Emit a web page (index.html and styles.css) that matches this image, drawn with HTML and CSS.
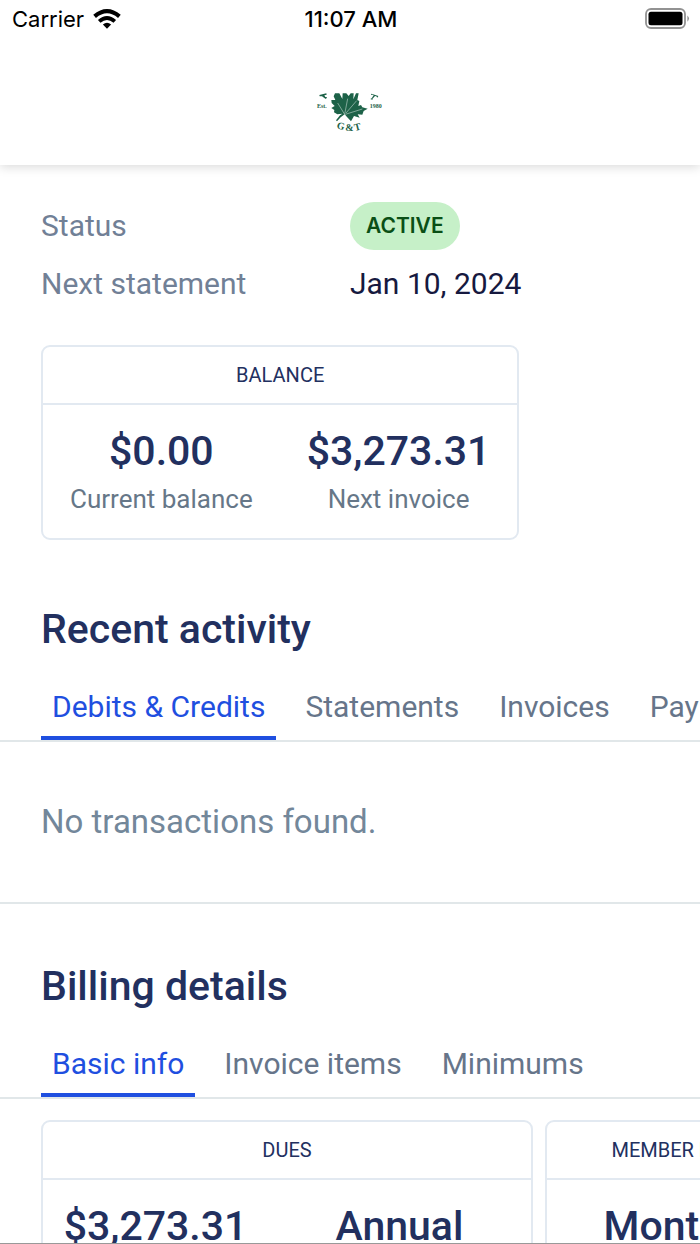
FILE: index.html
```html
<!DOCTYPE html>
<html lang="en">
<head>
    <meta charset="UTF-8">
    <meta name="viewport" content="width=device-width, initial-scale=1.0">
    <title>Billing</title>
    <link rel="stylesheet" href="styles.css">
</head>
<body>

    <div class="status-bar">
        <div class="carrier">
            <span>Carrier</span>
            <svg class="wifi" viewBox="0 0 28 20" aria-hidden="true">
                <path d="M1.6 7.4 Q14 -3 26.4 7.4" fill="none" stroke="#000" stroke-width="4.2"/>
                <path d="M6.2 12.4 Q14 5.4 21.8 12.4" fill="none" stroke="#000" stroke-width="3.8"/>
                <path d="M9.9 15.4 Q14 12 18.1 15.4 L14 19.8 Z"/>
            </svg>
        </div>
        <span class="clock">11:07 AM</span>
        <svg class="battery" viewBox="0 0 45 22" aria-hidden="true">
            <rect x="1" y="1" width="39" height="19" rx="5" fill="none" stroke="#929292" stroke-width="1.8"/>
            <rect x="3.5" y="3.7" width="34" height="13.6" rx="2.5"/>
            <path d="M42.4 7.5 Q45.6 10.5 42.4 13.7 Z" fill="#929292"/>
        </svg>
    </div>

    <header class="header">
        <svg class="logo" viewBox="0 0 270 180" role="img" aria-label="G&amp;T">
            <g fill="#1d6248">
                <path d="M90 40 L103 40 L112 57 L113 40 L124 40 L131 48 L137 40 L146 40 L145 58 L153 40 L161 40 L157 60 L163 63 L160 78 L168 75 L172 82 L188 86 L176 93 L172 104 L158 103 L164 113 L147 108 L138 124 L126 111 L119 103 L107 112 L96 124 L93 121 L105 106 L112 101 L97 103 L87 97 L88 90 L79 84 L89 78 L80 69 L79 60 L91 60 L86 49 Z"/>
                <text x="36" y="84" class="logo-small">Est.</text>
                <text x="194" y="84" class="logo-small">1980</text>
                <text class="logo-text" transform="translate(94 145) rotate(14)">G</text>
                <text class="logo-text" transform="translate(121 154)">&amp;</text>
                <text class="logo-text" transform="translate(150 153) rotate(-14)">T</text>
                <path d="M43 45 L64 40 L65 44 L58 46 L61 51 L66 51 L63 57 L59 55 L51 49 L44 49 Z"/>
                <path d="M199 41 L220 48 L217 53 L214 49 L210 48 L202 57 L203 60 L196 57 L200 55 L206 46 L202 44 L198 45 Z"/>
            </g>
            <path d="M119 103 L98 69 M119 103 L128 56 M123 99 L155 62 M121 103 L172 87" fill="none" stroke="#d5e5de" stroke-width="1.6"/>
        </svg>
    </header>

    <main class="content">
        <section class="summary">
            <dl class="details">
                <dt>Status</dt>
                <dd><span class="badge">ACTIVE</span></dd>
                <dt>Next statement</dt>
                <dd>Jan 10, 2024</dd>
            </dl>
            <div class="card">
                <h3 class="card-title">BALANCE</h3>
                <div class="card-body">
                    <div class="figure">
                        <span class="amount">$0.00</span>
                        <span class="label">Current balance</span>
                    </div>
                    <div class="figure">
                        <span class="amount">$3,273.31</span>
                        <span class="label">Next invoice</span>
                    </div>
                </div>
            </div>
        </section>

        <section>
            <h2>Recent activity</h2>
            <nav class="tabs">
                <button type="button" class="tab active">Debits &amp; Credits</button>
                <button type="button" class="tab">Statements</button>
                <button type="button" class="tab">Invoices</button>
                <button type="button" class="tab">Payments</button>
            </nav>
            <p class="empty">No transactions found.</p>
        </section>

        <section>
            <h2>Billing details</h2>
            <nav class="tabs">
                <button type="button" class="tab active">Basic info</button>
                <button type="button" class="tab">Invoice items</button>
                <button type="button" class="tab">Minimums</button>
            </nav>
            <div class="cards">
                <div class="card">
                    <h3 class="card-title">DUES</h3>
                    <div class="card-body dues">
                        <div class="figure">
                            <span class="amount">$3,273.31</span>
                            <span class="label">Amount</span>
                        </div>
                        <div class="figure">
                            <span class="amount">Annual</span>
                            <span class="label">Frequency</span>
                        </div>
                    </div>
                </div>
                <div class="card">
                    <h3 class="card-title">MEMBER FEES</h3>
                    <div class="card-body member">
                        <div class="figure">
                            <span class="amount">Monthly</span>
                            <span class="label">Frequency</span>
                        </div>
                    </div>
                </div>
            </div>
        </section>
    </main>

</body>
</html>
```

FILE: styles.css
```css
* {
    box-sizing: border-box;
}
body {
    display: flex;
    flex-direction: column;
    height: 100vh;
    margin: 0;
    overflow: hidden;
    background-color: #fff;
    color: #22305f;
    font-family: Roboto, sans-serif;
    border-bottom: 1px solid #999;
}
h2, h3, p, dl, dd {
    margin: 0;
}

/* phone status bar */
.status-bar {
    position: relative;
    z-index: 1;
    display: grid;
    grid-template-columns: 1fr auto 1fr;
    align-items: center;
    flex: none;
    height: 38px;
    padding: 0 10px 0 12px;
    background-color: #fff;
    color: #000;
    font-family: Inter, sans-serif;
    font-size: 22px;
}
.carrier {
    display: flex;
    align-items: center;
    gap: 9px;
}
.clock {
    font-weight: 500;
}
.wifi {
    width: 28px;
    height: 20px;
}
.battery {
    width: 45px;
    height: 22px;
    justify-self: end;
}

.header {
    display: flex;
    justify-content: center;
    flex: none;
    height: 127px;
    padding-top: 42px;
    background-color: #fff;
    box-shadow: 0 2px 10px rgba(0, 0, 0, 0.15);
}
.logo {
    width: 90px;
    height: 60px;
}
.logo-text {
    font: bold 30px "Liberation Serif", serif;
}
.logo-small {
    font: bold 18px "Liberation Serif", serif;
}

.content {
    flex: 1;
    min-height: 0;
    overflow: auto;
    scrollbar-width: none;
}
.summary {
    padding: 37px 41px 61px;
}
.details {
    display: grid;
    grid-template-columns: 1fr 1fr;
    row-gap: 10px;
    margin-bottom: 37px;
    font-size: 30px;
    line-height: 48px;
}
.details dt {
    color: #718096;
}
.details dd {
    color: #16193f;
}
.badge {
    display: block;
    width: fit-content;
    padding: 0 16px;
    border-radius: 24px;
    background-color: #c6f0c8;
    color: #0a4f16;
    font-family: Inter, sans-serif;
    font-size: 21px;
    font-weight: 600;
}

.card {
    flex: none;
    width: fit-content;
    border: 2px solid #e2e9f1;
    border-radius: 9px;
}
.card-title {
    border-bottom: 2px solid #e2e9f1;
    font-size: 20px;
    font-weight: 400;
    line-height: 56px;
    text-align: center;
}
.card-body {
    display: flex;
    padding: 22px 0 15px;
}
.figure {
    display: flex;
    flex-direction: column;
    align-items: center;
    padding: 0 27px;
}
.amount {
    font-size: 41px;
    font-weight: 500;
    line-height: 48px;
}
.label {
    color: #667788;
    font-size: 26px;
    line-height: 48px;
}

h2 {
    padding: 0 41px;
    font-size: 41px;
    font-weight: 500;
    line-height: 56px;
}
.tabs {
    display: flex;
    gap: 18px;
    margin-top: 21px;
    padding-left: 41px;
    overflow: hidden;
    border-bottom: 2px solid #e1e7e9;
}
.tab {
    flex: none;
    padding: 0 11px;
    border: none;
    border-bottom: 4px solid transparent;
    background: none;
    color: #66758a;
    cursor: pointer;
    font-family: inherit;
    font-size: 30px;
    line-height: 58px;
}
.tab.active {
    border-bottom-color: #1f4fe0;
    color: #1f4fe0;
}
.empty {
    margin-bottom: 54px;
    padding: 56px 41px;
    border-bottom: 2px solid #e1e7e9;
    color: #73879a;
    font-size: 33px;
    line-height: 48px;
}

.cards {
    display: flex;
    gap: 12px;
    padding: 21px 0 24px 41px;
    overflow: hidden;
}
.dues .figure {
    min-width: 225px;
    padding: 0 20px;
}
.dues .figure + .figure {
    min-width: 263px;
}
.member .figure {
    min-width: 262px;
}
```
